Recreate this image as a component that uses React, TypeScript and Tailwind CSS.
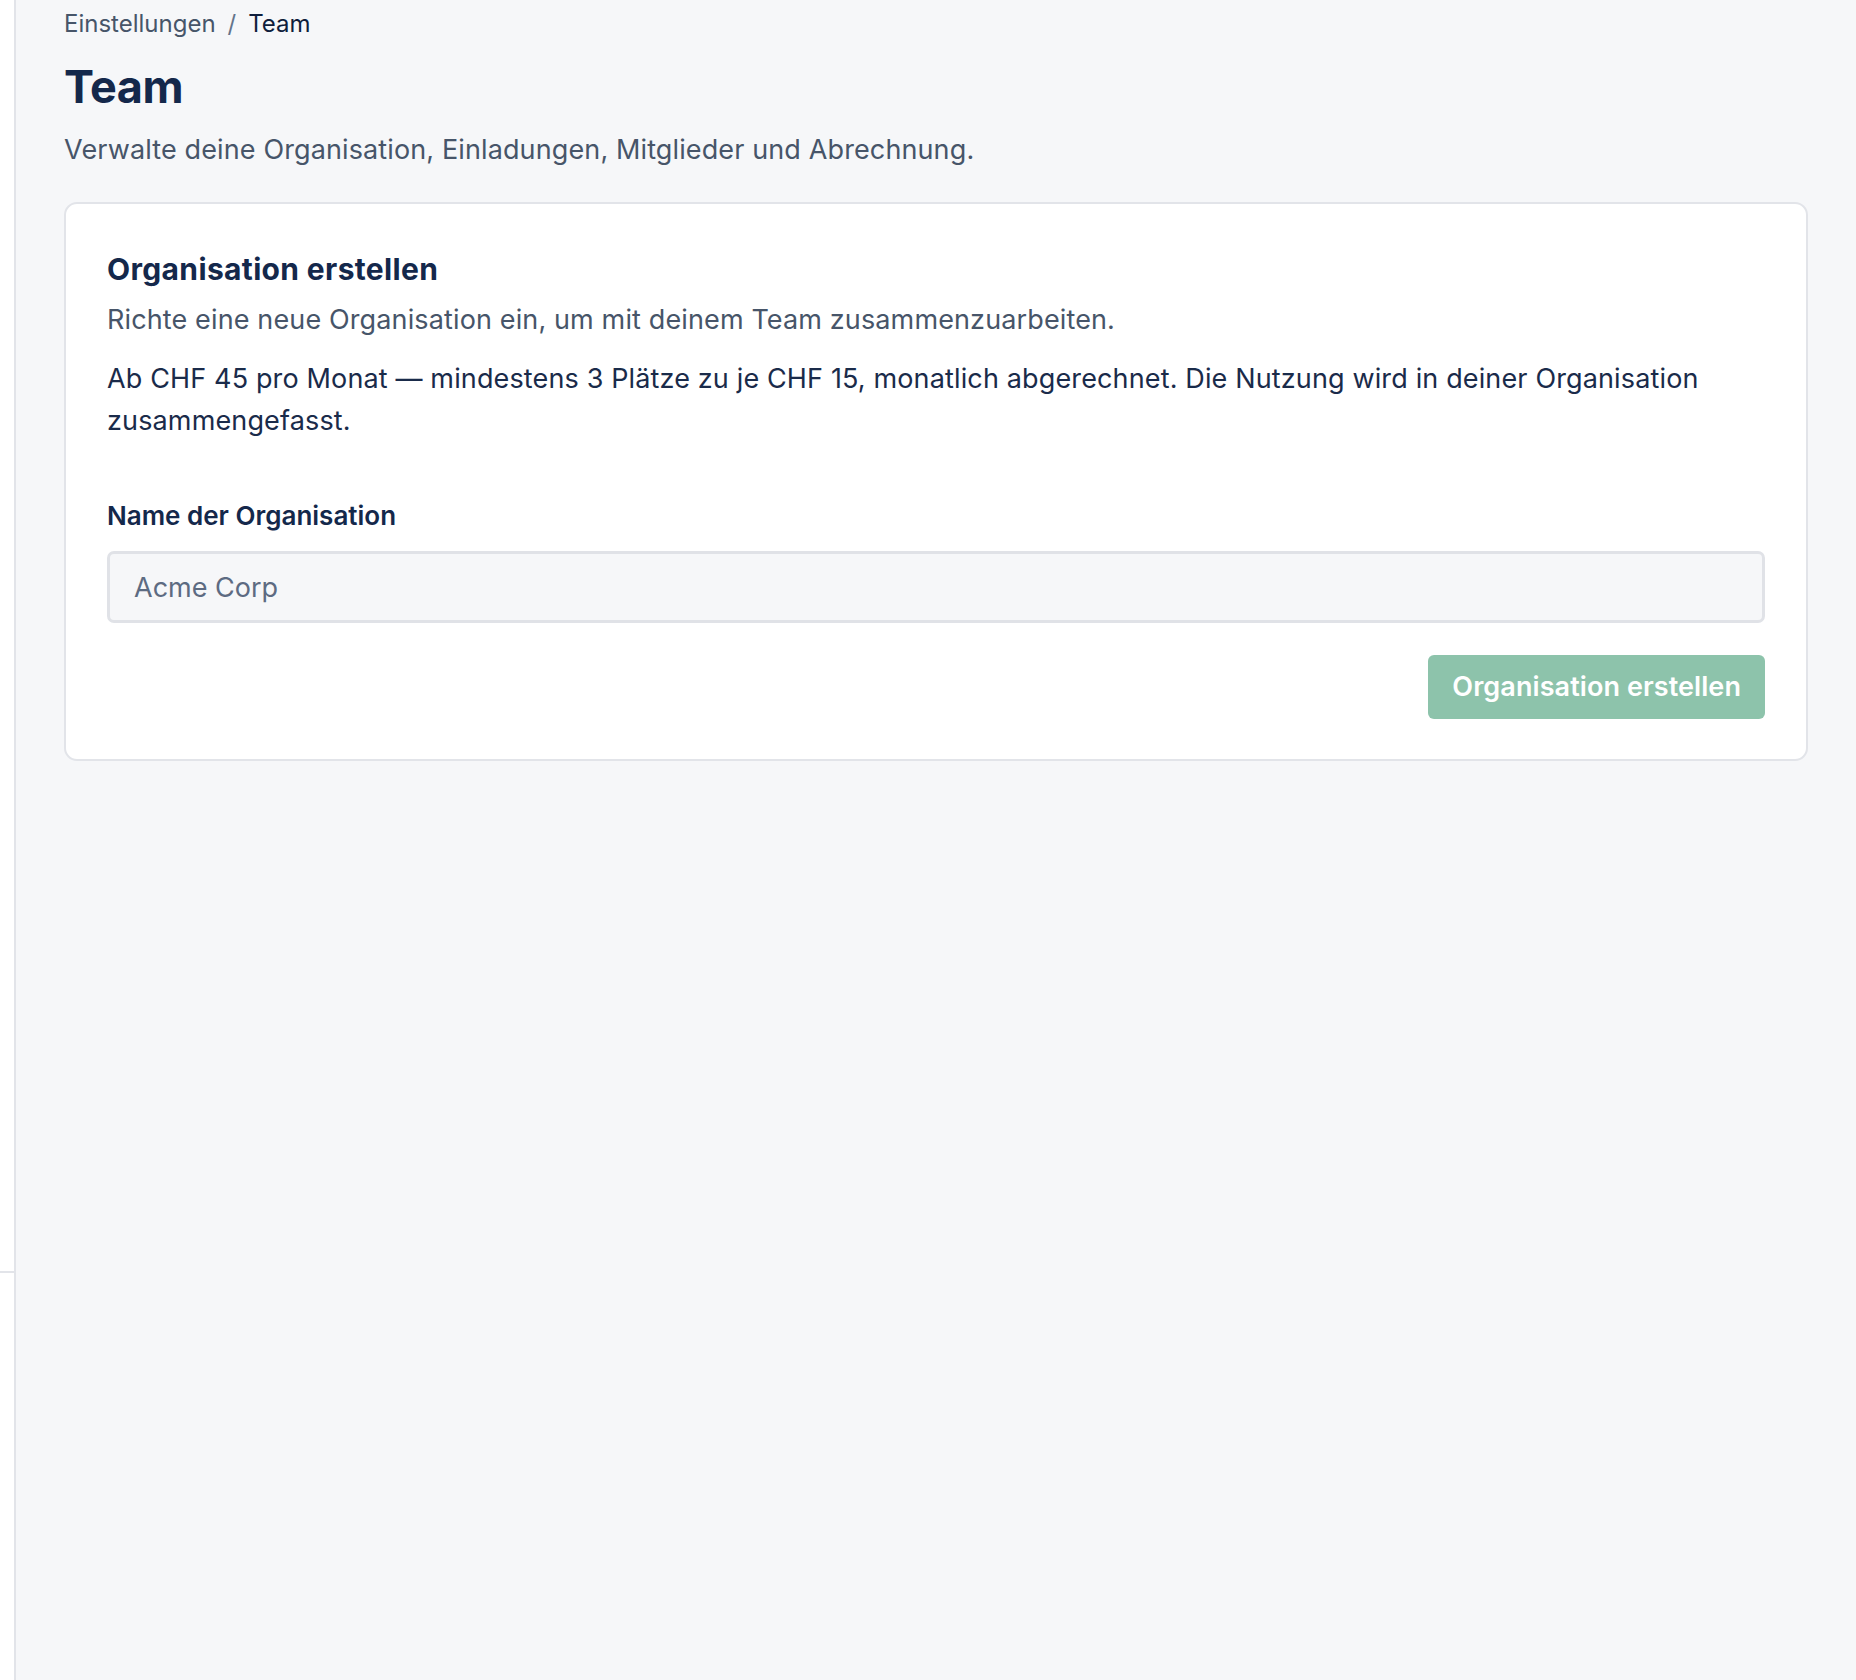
export default function App() {
  return (
    <div className="flex min-h-[1680px] w-full bg-[#f6f7f9] font-[Inter,ui-sans-serif,sans-serif] antialiased">
      {/* collapsed sidebar rail */}
      <aside className="flex w-[16px] shrink-0 flex-col border-r-2 border-[#e2e4e9] bg-white">
        <div className="flex-1" />
        <div className="h-[409px] border-t-2 border-[#e2e4e9]" />
      </aside>

      <main className="flex-1 px-[48px] pt-[6px]">
        <nav className="flex items-center gap-[12px] text-[24px] leading-[36px]">
          <span className="text-[#475569]">Einstellungen</span>
          <span className="text-[#64748b]">/</span>
          <span className="text-[#0f1e3c]">Team</span>
        </nav>

        <h1 className="mt-[18px] text-[45px] font-bold leading-[54px] tracking-[-0.5px] text-[#14284b]">
          Team
        </h1>
        <p className="mt-[15px] text-[27px] leading-[42px] tracking-[0.12px] text-[#475569]">
          Verwalte deine Organisation, Einladungen, Mitglieder und Abrechnung.
        </p>

        <section className="mt-[31px] rounded-[13px] border-2 border-[#e2e4e9] bg-white px-[41px] pb-[40px] pt-[44px]">
          <h2 className="text-[30px] font-bold leading-[42px] tracking-[0.35px] text-[#14284b]">
            Organisation erstellen
          </h2>
          <p className="mt-[9px] text-[27px] leading-[42px] tracking-[0.13px] text-[#475569]">
            Richte eine neue Organisation ein, um mit deinem Team zusammenzuarbeiten.
          </p>
          <p className="mt-[17px] text-[27px] leading-[42px] tracking-[0.14px] text-[#1a2b4a]">
            Ab CHF 45 pro Monat — mindestens 3 Plätze zu je CHF 15, monatlich abgerechnet. Die Nutzung wird in
            deiner Organisation zusammengefasst.
          </p>

          <label className="mt-[54px] block text-[26px] font-semibold leading-[39px] text-[#14284b]">
            Name der Organisation
          </label>
          <input
            type="text"
            placeholder="Acme Corp"
            className="mt-[16px] block h-[72px] w-full rounded-[7px] border-[3px] border-[#e0e2e7] bg-[#f6f7f9] px-[24px] text-[27px] text-[#14284b] placeholder:text-[#5d6b82] focus:outline-none"
          />

          <div className="mt-[32px] flex justify-end">
            <button
              type="button"
              disabled
              className="h-[64px] rounded-[6px] bg-[#8dc3ab] px-[24px] text-[27px] font-semibold tracking-[0.08px] text-white"
            >
              Organisation erstellen
            </button>
          </div>
        </section>
      </main>
    </div>
  );
}
